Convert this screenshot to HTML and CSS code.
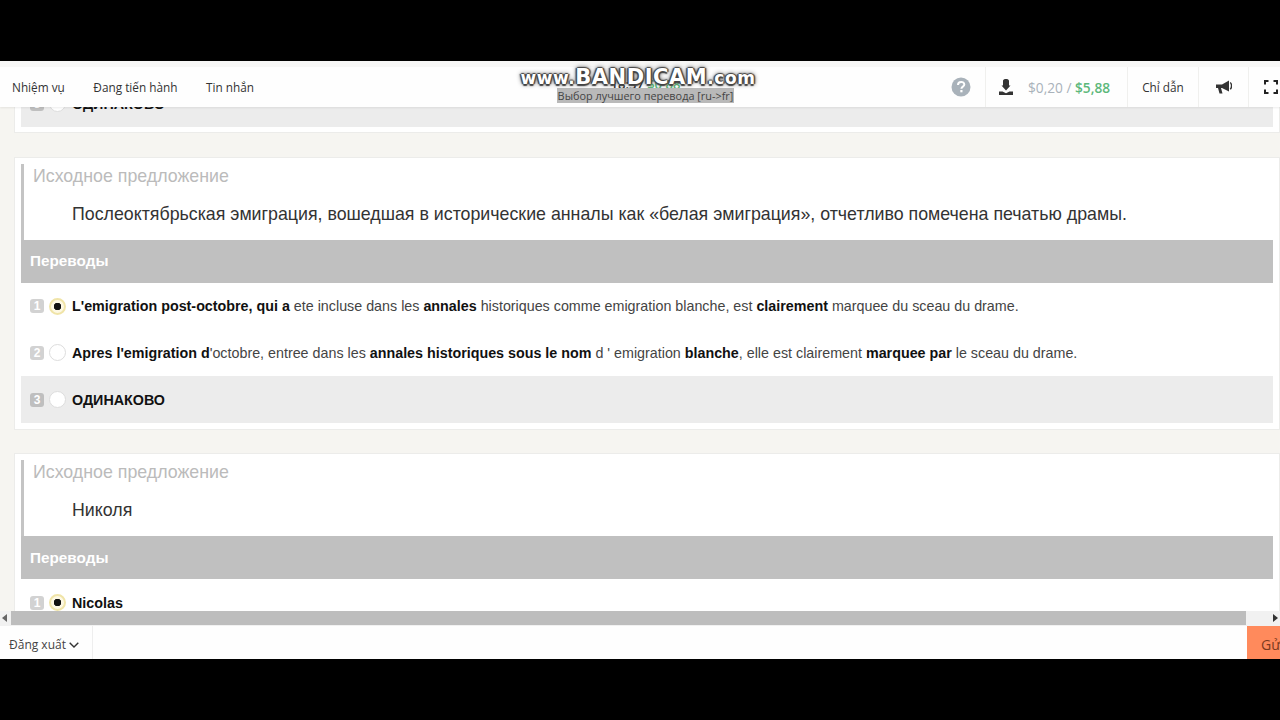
FILE: index.html
```html
<!DOCTYPE html>
<html lang="vi">
<head>
<meta charset="utf-8">
<title>Выбор лучшего перевода</title>
<link rel="stylesheet" href="styles.css">
</head>
<body>
<div class="screen">
  <header class="topbar">
    <nav class="nav">
      <a class="nav-link">Nhiệm vụ</a>
      <a class="nav-link">Đang tiến hành</a>
      <a class="nav-link">Tin nhắn</a>
    </nav>
    <div class="center">
      <div class="timer">18:37 <span class="timer-money">$0,88</span></div>
      <div class="subtitle"><span class="subtitle-mark">Выбор лучшего перевода [ru-&gt;fr]</span></div>
      <div class="watermark">www.<span class="wm-big">BANDICAM</span>.com</div>
    </div>
    <div class="tools">
      <div class="tool tool-help">
        <svg class="ico-help" viewBox="0 0 20 20"><circle cx="10" cy="10" r="9.5" fill="#a9b2ba"/><path d="M7 8c0-4 6.300-4 6.300-.6 0 2.200-2.900 2.200-2.900 4.300" fill="none" stroke="#fff" stroke-width="2"/><rect x="9.300" y="13" width="2.200" height="2.300" fill="#fff"/></svg>
      </div>
      <div class="tool tool-money">
        <svg class="ico-dl" viewBox="0 0 14 16"><path d="M4 2c0-2.600 6-2.600 6 0v4.500h1.500L7 11.500 2.500 6.500H4z" fill="#333"/><path d="M0 12.500h3.500L7 14.200l3.500-1.700H14V16H0z" fill="#333"/></svg>
        <span class="money"><span class="money-a">$0,20</span> <span class="money-s">/</span> <span class="money-b">$5,88</span></span>
      </div>
      <div class="tool tool-text">Chỉ dẫn</div>
      <div class="tool tool-horn">
        <svg class="ico-horn" viewBox="0 0 16 15"><path d="M0 4.500h6L13 .5v11L6 8H5l1.500 5.500H3.500L2 8H0z" fill="#333"/><path d="M14.200 2.500c1.800 1.400 1.800 5.200 0 6.800" fill="none" stroke="#333" stroke-width="1.400"/></svg>
      </div>
      <div class="tool tool-full">
        <svg class="ico-full" viewBox="0 0 14 14"><path d="M1 4.500V1h3.500M9.500 1H13v3.500M13 9.500V13H9.500M4.500 13H1V9.500" fill="none" stroke="#222" stroke-width="2"/></svg>
      </div>
    </div>
  </header>

  <main class="content">
    <section class="card card-cut">
      <div class="row row-grey">
        <span class="num">3</span><span class="radio"></span><span class="answer"><b>ОДИНАКОВО</b></span>
      </div>
    </section>

    <section class="card">
      <div class="source">
        <div class="source-title">Исходное предложение</div>
        <div class="source-text">Послеоктябрьская эмиграция, вошедшая в исторические анналы как «белая эмиграция», отчетливо помечена печатью драмы.</div>
      </div>
      <div class="band">Переводы</div>
      <div class="row">
        <span class="num">1</span><span class="radio radio-on"></span>
        <span class="answer"><b>L'emigration post-octobre, qui a</b> ete incluse dans les <b>annales</b> historiques comme emigration blanche, est <b>clairement</b> marquee du sceau du drame.</span>
      </div>
      <div class="row">
        <span class="num">2</span><span class="radio"></span>
        <span class="answer"><b>Apres l'emigration d</b>'octobre, entree dans les <b>annales historiques sous le nom</b> d ' emigration <b>blanche</b>, elle est clairement <b>marquee par</b> le sceau du drame.</span>
      </div>
      <div class="row row-grey">
        <span class="num">3</span><span class="radio"></span><span class="answer"><b>ОДИНАКОВО</b></span>
      </div>
    </section>

    <section class="card">
      <div class="source">
        <div class="source-title">Исходное предложение</div>
        <div class="source-text">Николя</div>
      </div>
      <div class="band">Переводы</div>
      <div class="row">
        <span class="num">1</span><span class="radio radio-on"></span>
        <span class="answer"><b>Nicolas</b></span>
      </div>
    </section>
  </main>

  <div class="hscroll">
    <span class="arrow arrow-left"></span>
    <span class="thumb"></span>
    <span class="arrow arrow-right"></span>
  </div>

  <footer class="footer">
    <div class="logout">Đăng xuất
      <svg class="ico-chev" viewBox="0 0 10 6"><path d="M.7.8 5 5l4.300-4.200" fill="none" stroke="#333" stroke-width="1.400"/></svg>
    </div>
    <div class="send">Gửi</div>
  </footer>
</div>
</body>
</html>
```
FILE: styles.css
```css
* { box-sizing: border-box; }
html, body { margin: 0; height: 100%; background: #000; overflow: hidden; }
body { padding-top: 61px; font-family: "Liberation Sans", Arial, sans-serif; }

.screen {
  position: relative;
  height: 598px;
  display: flex;
  flex-direction: column;
  background: #f6f5f1;
  overflow: hidden;
}

/* top bar lies over the scrolled content */
.topbar {
  position: absolute;
  top: 0; left: 0; right: 0;
  height: 46px;
  z-index: 2;
  display: flex;
  align-items: stretch;
  justify-content: space-between;
  background: #fefefe;
  border-top: 6px solid #f7f7f6;
  box-shadow: 0 1px 2px rgba(0,0,0,.08);
  font-family: "Open Sans", sans-serif;
  font-size: 11.800px;
  color: #333;
}
.nav { display: flex; align-items: center; gap: 28.500px; padding-left: 12px; }
.nav-link { white-space: nowrap; }

.center {
  position: absolute;
  left: 0; right: 0; top: -6px;
  text-align: center;
  pointer-events: none;
}
.timer { position: absolute; left: 11px; right: 0; top: 14px; font-size: 13px; font-weight: 600; color: #333; }
.timer-money { color: #5cb87a; }
.subtitle { position: absolute; left: 11px; right: 0; top: 27px; line-height: 15px; font-size: 10.900px; }
.subtitle-mark { background: #b9b9b9; color: #444; padding: 0 1px; }
.watermark {
  position: absolute; left: -4px; right: 0; top: 3px;
  font-family: "DejaVu Sans", sans-serif;
  font-size: 17px;
  font-weight: 700;
  line-height: 26px;
  color: #fff;
  letter-spacing: .55px;
  text-shadow: -1.500px 0 1px #444, 1.500px 0 1px #444, 0 -1.500px 1px #444, 0 1.500px 1px #444, 0 0 5px #222;
}
.wm-big { font-size: 21px; }

.tools { display: flex; align-items: stretch; }
.tool { display: flex; align-items: center; justify-content: center; border-left: 1px solid #f0f0ee; }
.tool-help { border-left: 0; width: 48px; }
.ico-help { width: 20px; height: 20px; }
.tool-money { width: 142px; gap: 15px; justify-content: flex-start; padding-left: 13px; }
.ico-dl { width: 14px; height: 16px; }
.money { font-size: 13.700px; font-weight: 500; white-space: nowrap; }
.money-a, .money-s { color: #a9b2ba; }
.money-b { color: #5cb87a; font-weight: 600; }
.tool-text { width: 71px; }
.tool-horn { width: 50px; }
.ico-horn { width: 16px; height: 15px; }
.tool-full { width: 32px; justify-content: flex-start; padding-left: 15px; }
.ico-full { width: 14px; height: 14px; flex: none; }

.content {
  flex: 1;
  min-height: 0;
  overflow: hidden;
  padding: 18.330px 0 0 14px;
}

.card {
  background: #fff;
  border: 1px solid #ececea;
  padding: 6px 6px 6px 6px;
  margin-bottom: 23.500px;
}
.card-cut { border-top: 0; padding-top: 1px; padding-bottom: 5px; margin-bottom: 24px; }

.source { border-left: 3px solid #c4c4c4; height: 76px; padding-left: 9px; }
.source-title { font-size: 17.800px; line-height: 24px; color: #bbb; }
.source-text { font-size: 17.800px; line-height: 24px; color: #333; padding: 14px 0 0 39px; white-space: nowrap; }

.band {
  height: 43px;
  display: flex;
  align-items: center;
  padding-left: 9px;
  background: #c0c0c0;
  color: #fff;
  font-size: 15.300px;
  font-weight: 700;
}

.row {
  height: 46.670px;
  display: flex;
  align-items: center;
  padding-left: 9px;
  font-size: 14.300px;
  color: #444;
}
.row-grey { background: #ececec; }
.row b { color: #111; }

.num {
  width: 14px; height: 14px;
  flex: none;
  background: #d2d2d2;
  color: #fff;
  font-size: 12px;
  font-weight: 700;
  line-height: 14px;
  text-align: center;
  border-radius: 3px;
}
.row-grey .num { background: #bfbfbf; }

.radio {
  width: 17px; height: 17px;
  flex: none;
  margin: 0 6px 0 5px;
  border: 1px solid #ddd;
  border-radius: 50%;
  background: #fff;
}
.radio-on {
  border: 2px solid #f0e4a8;
  background: radial-gradient(circle, #111 0 3.500px, #fdf8e4 4px);
}
.answer { white-space: nowrap; }

.hscroll { height: 15px; flex: none; display: flex; align-items: flex-start; background: #f1f1f1; }
.thumb { flex: 0 0 1235px; height: 14px; background: #bdbdbd; }
.arrow { flex: none; width: 0; height: 0; margin-top: 3px; border-top: 4px solid transparent; border-bottom: 4px solid transparent; }
.arrow-left { border-right: 5px solid #666; margin-left: 2px; margin-right: 4px; }
.arrow-right { border-left: 5px solid #333; margin-left: 27px; }

.footer { height: 33px; flex: none; display: flex; justify-content: space-between; background: #fefefe; font-family: "Open Sans", sans-serif; font-size: 12px; color: #444; }
.logout { width: 93px; padding: 4px 0 0 9px; display: flex; align-items: center; gap: 3px; border-right: 1px solid #eee; white-space: nowrap; }
.ico-chev { width: 10px; height: 6px; }
.send { width: 33px; background: #ff8a5c; color: #7a3a20; font-size: 14px; line-height: 37px; padding-left: 14px; overflow: hidden; white-space: nowrap; }
```
